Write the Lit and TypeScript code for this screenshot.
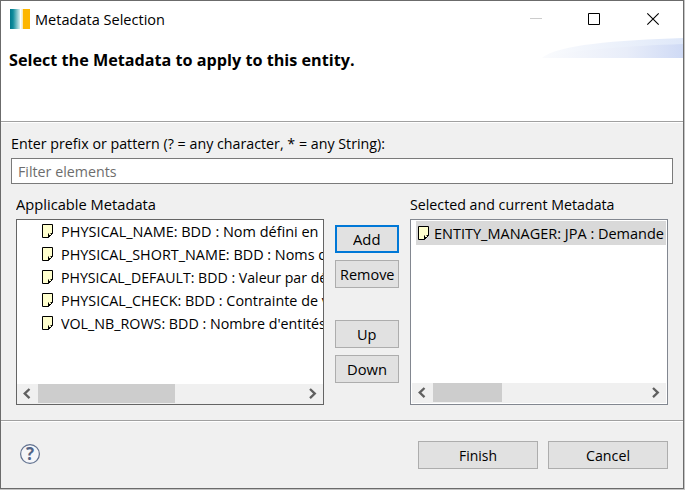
import { LitElement, html, css } from "lit";
import { customElement, property } from "lit/decorators.js";

/** One line of text, condensed or widened so that its label takes a set width. */
@customElement("text-run")
class TextRun extends LitElement {
  @property() text = "";
  @property() tail = "";
  @property({ type: Number }) w = 0;
  static styles = css`
    :host { display: block; height: 20px; line-height: 20px; white-space: pre; flex: none; }
    .run { display: inline-block; transform-origin: 0 0; }
  `;
  updated() {
    const run = this.renderRoot.querySelector<HTMLElement>(".run")!;
    const label = this.renderRoot.querySelector<HTMLElement>(".label")!;
    run.style.transform = "none";
    run.style.transform = `scaleX(${this.w / label.getBoundingClientRect().width})`;
    this.style.width = `${this.w}px`;
  }
  render() {
    return html`<span class="run"><span class="label">${this.text}</span>${this.tail}</span>`;
  }
}

@customElement("push-button")
class PushButton extends LitElement {
  @property() label = "";
  @property({ type: Number }) w = 0;
  static styles = css`
    :host { display: flex; justify-content: center; box-sizing: border-box; height: 28px; padding-top: 3px;
      border: 1px solid #adadad; background: #e1e1e1; }
    :host([focused]) { border: 2px solid #0078d7; padding-top: 2px; }
  `;
  render() {
    return html`<text-run .text=${this.label} .w=${this.w}></text-run>`;
  }
}

@customElement("scroll-bar")
class ScrollBar extends LitElement {
  @property({ type: Number }) thumb = 0;
  static styles = css`
    :host { display: flex; height: 20px; background: #f0f0f0; }
    svg { display: block; flex: none; }
    .track { flex: 1; }
    .thumb { height: 19px; background: #cdcdcd; }
  `;
  render() {
    const arrow = (d: string) => html`<svg width="21" height="20" viewBox="0 0 21 20">
      <path d=${d} fill="none" stroke="#606060" stroke-width="2.3" /></svg>`;
    return html`${arrow("M12.5 5 7.7 9.6 12.5 14.2")}
      <div class="track"><div class="thumb" style="width:${this.thumb}px"></div></div>
      ${arrow("M8 5 12.8 9.6 8 14.2")}`;
  }
}

const note = html`<svg class="note" width="11" height="14" viewBox="0 0 11 14">
  <path d="M.5.5h10v9l-4 4h-6z" fill="#ffffce" stroke="#000" />
  <path d="M6 13.5V9.5h4.5z" fill="#000" /><path d="M7 9h2v2H7z" fill="#ffffce" />
  <path d="M6.5 13.5v-3M8.5 9.5h2" stroke="#000" fill="none" />
</svg>`;

const available = [
  { text: "PHYSICAL_NAME: BDD : Nom défini en", tail: "", w: 257.5 },
  { text: "PHYSICAL_SHORT_NAME: BDD : Noms", tail: " d", w: 253.5 },
  { text: "PHYSICAL_DEFAULT: BDD : Valeur par", tail: " dé", w: 246 },
  { text: "PHYSICAL_CHECK: BDD : Contrainte de", tail: " v", w: 257 },
  { text: "VOL_NB_ROWS: BDD : Nombre", tail: " d'entités", w: 204 },
];

@customElement("app-root")
class AppRoot extends LitElement {
  static styles = css`
    :host { display: block; width: 685px; height: 490px; overflow: hidden; background: #c4c4c4;
      font: 15px "Open Sans", "Noto Sans", sans-serif; color: #000; }
    * { box-sizing: border-box; }
    svg { display: block; flex: none; }
    .window { width: 684px; height: 489px; border: 1px solid #6b6b6b; background: #f0f0f0;
      display: flex; flex-direction: column; }
    .head { height: 121px; flex: none; background: #fff; border-bottom: 1px solid #a0a0a0; }
    .titlebar { display: flex; height: 37px; padding: 8px 0 0 9px; }
    .title { margin: 0 0 0 5px; }
    .controls { margin-left: auto; margin-right: 23px; }
    .banner { display: flex; justify-content: space-between; padding-left: 8px; }
    .heading { font-size: 16px; font-weight: 700; margin-top: 12px; }
    .body { height: 299px; flex: none; border-top: 1px solid #fff; border-bottom: 1px solid #a0a0a0; padding: 10px 10px 0; }
    .filter { height: 26px; margin-top: 4px; border: 1px solid #7a7a7a; background: #fff; color: #6d6d6d; padding: 2px 0 0 6px; }
    .prompt { margin-bottom: 5px; }
    .columns { display: grid; grid-template-columns: 308px 64px 258px; column-gap: 11px; padding: 10px 5px 0; }
    .list { height: 186px; margin-top: 5px; border: 1px solid #646464; background: #fff; overflow: hidden;
      display: flex; flex-direction: column; }
    .list.selected { border-color: #828790; padding: 1px; }
    .rows { flex: 1; overflow: hidden; }
    .row { display: flex; height: 23px; padding: 1px 0 0 25px; }
    .row .note { margin: 3px 8px 0 0; }
    .row.current { height: 24px; margin-left: 4px; padding: 2px 0 0 2px; background: #d9d9d9; }
    .row.current .note { margin-right: 5px; }
    .actions { display: flex; flex-direction: column; gap: 7px; padding-top: 31px; }
    .gap { height: 18px; }
    .foot { flex: 1; border-top: 1px solid #fff; display: flex; padding: 19px 15px 0 18px; gap: 10px; }
    .foot push-button { width: 120px; }
    .help { margin: 2px auto 0 0; }
    .mark { font: 700 17px "Open Sans", sans-serif; }
  `;
  render() {
    return html`<div class="window">
      <div class="head">
        <div class="titlebar">
          <svg width="20" height="20" viewBox="0 0 20 20">
            <defs><linearGradient id="teal"><stop offset="0" stop-color="#00788c" /><stop offset=".3" stop-color="#108c9c" />
              <stop offset="1" stop-color="#d8eeee" /></linearGradient></defs>
            <path d="M0 0h10v20H0z" fill="url(#teal)" /><path d="M11 0h1v20h-1z" fill="#eef5ee" />
            <path d="M12 0h1v20h-1z" fill="#fbe9bb" /><path d="M13 0h7v20h-7z" fill="#fdb600" />
          </svg>
          <text-run class="title" .text=${"Metadata Selection"} .w=${130}></text-run>
          <svg class="controls" width="130" height="20" viewBox="0 0 130 20">
            <path d="M0 9.5h12" stroke="#ccc" />
            <path d="M58.5 4.5h11v11h-11z" fill="none" stroke="#000" />
            <path d="M117.3 4.3l11.4 11.4M128.7 4.3l-11.4 11.4" stroke="#000" stroke-width="1.1" />
          </svg>
        </div>
        <div class="banner">
          <text-run class="heading" .text=${"Select the Metadata to apply to this entity."} .w=${345.5}></text-run>
          <svg width="141" height="20" viewBox="0 0 141 20">
            <defs>
              <linearGradient id="pale"><stop offset="0" stop-color="#fafbfd" /><stop offset="1" stop-color="#dfe8f9" /></linearGradient>
              <linearGradient id="deep"><stop offset="0" stop-color="#fafbfd" /><stop offset=".6" stop-color="#e8edf9" />
                <stop offset="1" stop-color="#cfdaf5" /></linearGradient>
            </defs>
            <path d="M0 20C14 7 75 2 141 0v20z" fill="url(#pale)" />
            <path d="M0 20C28 12 85 8 141 6v14z" fill="url(#deep)" />
          </svg>
        </div>
      </div>
      <div class="body">
        <text-run class="prompt" .text=${"Enter prefix or pattern (? = any character, * = any String):"} .w=${374}></text-run>
        <div class="filter"><text-run .text=${"Filter elements"} .w=${98.5}></text-run></div>
        <div class="columns">
          <div>
            <text-run .text=${"Applicable Metadata"} .w=${140}></text-run>
            <div class="list">
              <div class="rows">${available.map((r) => html`<div class="row">${note}
                <text-run .text=${r.text} .tail=${r.tail} .w=${r.w}></text-run></div>`)}</div>
              <scroll-bar .thumb=${137}></scroll-bar>
            </div>
          </div>
          <div class="actions">
            <push-button focused .label=${"Add"} .w=${27.5}></push-button>
            <push-button .label=${"Remove"} .w=${54.5}></push-button>
            <div class="gap"></div>
            <push-button .label=${"Up"} .w=${19.5}></push-button>
            <push-button .label=${"Down"} .w=${40}></push-button>
          </div>
          <div>
            <text-run .text=${"Selected and current Metadata"} .w=${204.5}></text-run>
            <div class="list selected">
              <div class="rows"><div class="row current">${note}
                <text-run .text=${"ENTITY_MANAGER: JPA : Demande"} .w=${230}></text-run></div></div>
              <scroll-bar .thumb=${69}></scroll-bar>
            </div>
          </div>
        </div>
      </div>
      <div class="foot">
        <svg class="help" width="22" height="22" viewBox="0 0 22 22">
          <circle cx="11" cy="11" r="9.4" fill="#f5f6f9" stroke="#61718f" stroke-width="1.2" />
          <text class="mark" x="11" y="17" text-anchor="middle" fill="#536587">?</text>
        </svg>
        <push-button .label=${"Finish"} .w=${38}></push-button>
        <push-button .label=${"Cancel"} .w=${44}></push-button>
      </div>
    </div>`;
  }
}
